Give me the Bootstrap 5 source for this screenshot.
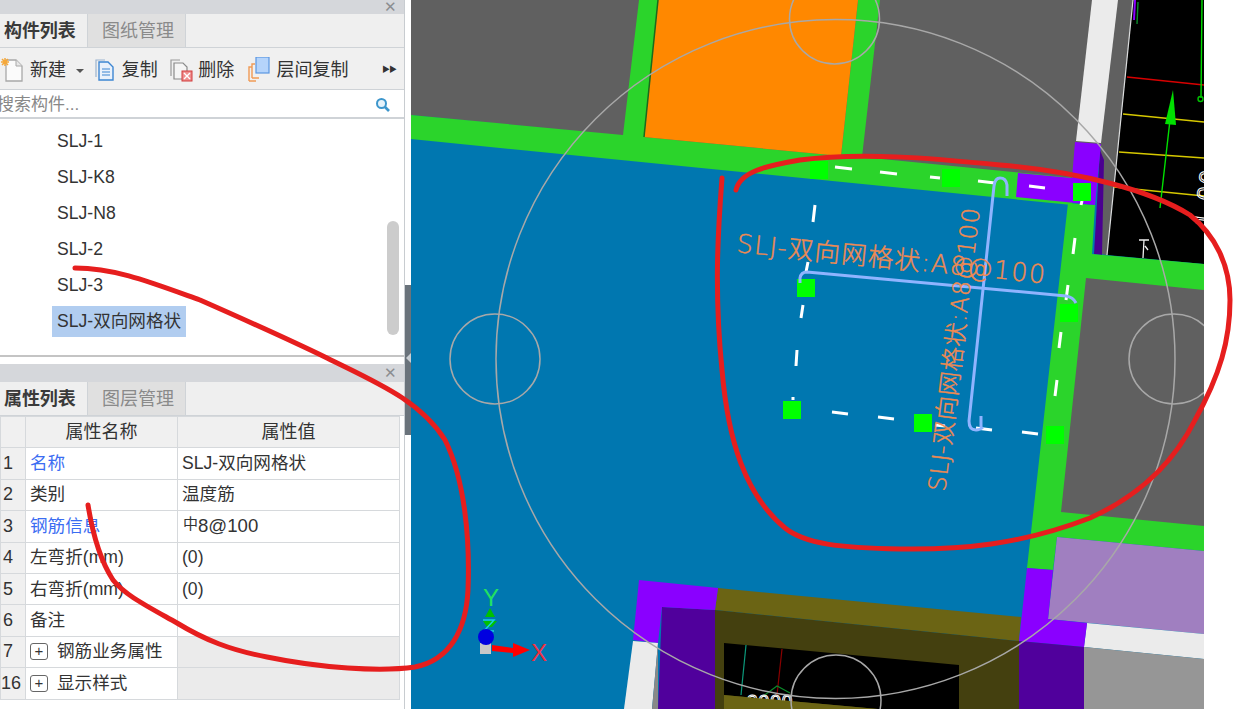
<!DOCTYPE html>
<html lang="zh-CN">

<head>
  <meta charset="UTF-8">
  <meta name="viewport" content="width=device-width, initial-scale=1.0">
  <title>构件列表</title>
  <link href="https://cdn.jsdelivr.net/npm/bootstrap@5.3.0/dist/css/bootstrap.min.css" rel="stylesheet">
  <style>
    html, body { height: 709px; overflow: hidden; }
    body {
      position: relative;
      font-family: "Liberation Sans", "Noto Sans CJK SC", sans-serif;
      font-size: 17px;
      color: #333;
      background: #fff;
    }
    .side-panel { width: 405px; height: 709px; flex: none; border-right: 1px solid #c8ccd0; }
    .side-strip { width: 6px; height: 709px; flex: none; padding-top: 285px; }
    .strip-handle { height: 150px; background: #6a737b; position: relative; }
    .strip-handle::after {
      content: "";
      position: absolute;
      top: 68px;
      left: 1px;
      border: 5px solid transparent;
      border-left: 0;
      border-right-color: #c9ced3;
    }
    .drawing { width: 793px; height: 709px; flex: none; display: block; }

    .title-bar { background: #d5d7db; color: #8b8d91; font-size: 15px; line-height: 14px; text-align: right; padding-right: 7px; }
    .title-top { height: 14px; }
    .title-low { height: 18px; line-height: 18px; }
    .tab-bar { height: 34px; background: #efefef; border-bottom: 1px solid #cfd3d7; }
    .tab-on, .tab-off { font-size: 18px; line-height: 35px; height: 33px; }
    .tab-on { width: 88px; font-weight: 700; padding-left: 4px; letter-spacing: -.1px; border-right: 1px solid #cfd3d7; color: #3a3a3a; }
    .tab-off { width: 98px; color: #8a8a8a; background: #e0e0e0; padding-left: 14px; border-right: 1px solid #cfd3d7; }

    .tool-bar { height: 42px; background: #f0f0f0; border-bottom: 1px solid #cfd3d7; }
    .tool-item { position: relative; height: 41px; line-height: 45px; font-size: 18px; white-space: nowrap; }
    .tool-item svg { position: absolute; top: 9px; left: 0; }
    .tool-new { width: 97px; padding-left: 30px; }
    .tool-new svg { left: 1px; }
    .tool-copy { width: 77px; padding-left: 27px; }
    .tool-del { width: 79px; padding-left: 28px; }
    .tool-layer { width: 138px; padding-left: 29px; }
    .tool-caret { display: inline-block; margin-left: 10px; border: 4px solid transparent; border-top-color: #555; border-bottom: 0; vertical-align: 3px; }
    .tool-more { font-size: 8px; letter-spacing: -1px; line-height: 43px; color: #333; }

    .search-row { height: 29px; border-bottom: 2px solid #cfd3d7; background: #fff; position: relative; }
    .search-input { height: 30px; border: 0; border-radius: 0; padding: 0; text-indent: -3px; font-size: 17px; color: #777; background: transparent; box-shadow: none; }
    .search-input::placeholder { color: #888; }
    .search-icon { position: absolute; right: 13px; top: 7px; }

    .comp-list { height: 238px; position: relative; padding-top: 5px; border-bottom: 2px solid #c4c4c4; }
    .comp-row { height: 36px; line-height: 35px; padding: 0 0 0 57px; border: 0; background: transparent; color: #333; font-size: 17.6px; }
    .comp-on { display: inline-block; height: 31px; line-height: 31px; padding: 0 5px; margin-left: -5px; background: #b1cdf0; }
    .list-thumb { position: absolute; right: 5px; top: 102px; width: 12px; height: 114px; background: #ccc; border-radius: 6px; }
    .panel-gap { height: 7px; background: #fff; }

    .prop-table { table-layout: fixed; width: 400px; margin: 0; font-size: 17.6px; border-color: #d6d9dc; }
    .prop-table th, .prop-table td { height: 31.4px; padding: 0 0 0 4px; line-height: 29px; vertical-align: middle; white-space: nowrap; border-width: 1px; border-color: #d6d9dc; color: #333; background: #fff; box-shadow: none; }
    .prop-table th { font-weight: 400; font-size: 18px; text-align: center; background: #f0f0f0; padding-left: 0; }
    .prop-table .row-num { background: #f0f0f0; font-size: 18px; padding: 0 0 0 2px; overflow: visible; }
    .prop-table .row-num-wide { padding-left: 0; }
    .prop-table .prop-link { color: #3b6df2; }
    .prop-table .prop-group { background: #ebebeb; }
    .plus-box { display: inline-block; width: 18px; height: 17px; border: 1px solid #666; border-radius: 3px; line-height: 13px; text-align: center; font-size: 15px; margin-right: 9px; vertical-align: 1px; background: #fff; }
    .phi-value { font-size: 18.6px; }
    .phi-mark { font-size: 15px; position: relative; top: -3px; margin-left: 1px; }

    .cad-label { font-family: "DejaVu Sans", "Noto Sans CJK SC", sans-serif; font-weight: 200; font-size: 25.5px; letter-spacing: 1.3px; fill: #f08a50; stroke: #f08a50; stroke-width: .4; }
    .cad-label-up { font-size: 24px; letter-spacing: .8px; }
    .cad-small { font-family: "Liberation Sans", sans-serif; fill: none; stroke: #fff; stroke-width: 1; }
    .axis-mark { font-family: "Liberation Sans", sans-serif; font-size: 24px; }
    .mark-layer { position: absolute; top: 0; left: 0; width: 1233px; height: 709px; pointer-events: none; }
  </style>
</head>

<body>
  <div class="d-flex">
    <div class="side-panel">
      <div class="title-bar title-top">✕</div>
      <div class="tab-bar d-flex">
        <div class="tab-on">构件列表</div>
        <div class="tab-off">图纸管理</div>
      </div>
      <div class="tool-bar d-flex">
        <div class="tool-item tool-new">
          <svg width="24" height="26" viewBox="0 0 24 26">
            <path d="M5 3H15L21 9V24H5Z" fill="#fbfbfb" stroke="#a8a8a8" stroke-width="1.3"/>
            <path d="M15 3V9H21" fill="#e8e8e8" stroke="#a8a8a8"/>
            <path d="M4 1V9M0 5H8M1 2L7 8M7 2L1 8" stroke="#f5a83a" stroke-width="1.5"/>
          </svg>新建<span class="tool-caret"></span>
        </div>
        <div class="tool-item tool-copy">
          <svg width="20" height="26" viewBox="0 0 20 26">
            <path d="M1 20V3H10" fill="none" stroke="#9bb4cf" stroke-width="1.2"/>
            <path d="M4 5H13L18 10V23H4Z" fill="#e9f1fb" stroke="#3d86d2" stroke-width="1.4"/>
            <path d="M7 12H15M7 15H15M7 18H15" stroke="#3d86d2" stroke-width="1.2"/>
          </svg>复制
        </div>
        <div class="tool-item tool-del">
          <svg width="24" height="26" viewBox="0 0 24 26">
            <path d="M1 19V3H10" fill="none" stroke="#9a9a9a" stroke-width="1.2"/>
            <path d="M4 6H13L17 10V22H4Z" fill="#f5f5f5" stroke="#8a8a8a" stroke-width="1.2"/>
            <rect x="12" y="14" width="10" height="10" fill="#ee8d8d" stroke="#d23d3d"/>
            <path d="M14 16L20 22M20 16L14 22" stroke="#fff" stroke-width="1.4"/>
          </svg>删除
        </div>
        <div class="tool-item tool-layer">
          <svg width="24" height="26" viewBox="0 0 24 26">
            <path d="M1 24V10H4M1 24H8" fill="none" stroke="#f09a55" stroke-width="1.4"/>
            <path d="M4 21V7H7M4 21H11" fill="none" stroke="#f09a55" stroke-width="1.4"/>
            <rect x="8" y="0" width="13" height="16" fill="#b5d4fb" stroke="#5b96e2" stroke-width="1.2"/>
          </svg>层间复制
        </div>
        <div class="tool-more ms-auto pe-2">▶▶</div>
      </div>
      <div class="search-row">
        <input type="text" class="form-control search-input" placeholder="搜索构件...">
        <svg class="search-icon" width="16" height="16" viewBox="0 0 16 16">
          <circle cx="6.5" cy="6.5" r="4.5" fill="#e6f3fb" stroke="#3d96cc" stroke-width="2"/>
          <path d="M10 10L14 14" stroke="#3d96cc" stroke-width="2.6"/>
        </svg>
      </div>
      <div class="comp-list">
        <div class="list-group list-group-flush">
          <div class="list-group-item comp-row">SLJ-1</div>
          <div class="list-group-item comp-row">SLJ-K8</div>
          <div class="list-group-item comp-row">SLJ-N8</div>
          <div class="list-group-item comp-row">SLJ-2</div>
          <div class="list-group-item comp-row">SLJ-3</div>
          <div class="list-group-item comp-row"><span class="comp-on">SLJ-双向网格状</span></div>
        </div>
        <div class="list-thumb"></div>
      </div>
      <div class="panel-gap"></div>
      <div class="title-bar title-low">✕</div>
      <div class="tab-bar d-flex">
        <div class="tab-on">属性列表</div>
        <div class="tab-off">图层管理</div>
      </div>
      <table class="table table-bordered prop-table">
        <colgroup>
          <col style="width: 25px">
          <col style="width: 152px">
          <col>
        </colgroup>
        <thead>
          <tr><th class="row-num"></th><th>属性名称</th><th>属性值</th></tr>
        </thead>
        <tbody>
          <tr><td class="row-num">1</td><td class="prop-link">名称</td><td>SLJ-双向网格状</td></tr>
          <tr><td class="row-num">2</td><td>类别</td><td>温度筋</td></tr>
          <tr><td class="row-num">3</td><td class="prop-link">钢筋信息</td><td class="phi-value"><span class="phi-mark">中</span>8@100</td></tr>
          <tr><td class="row-num">4</td><td>左弯折(mm)</td><td>(0)</td></tr>
          <tr><td class="row-num">5</td><td>右弯折(mm)</td><td>(0)</td></tr>
          <tr><td class="row-num">6</td><td>备注</td><td></td></tr>
          <tr><td class="row-num">7</td><td><span class="plus-box">+</span>钢筋业务属性</td><td class="prop-group"></td></tr>
          <tr><td class="row-num row-num-wide">16</td><td><span class="plus-box">+</span>显示样式</td><td class="prop-group"></td></tr>
        </tbody>
      </table>
    </div>

    <div class="side-strip">
      <div class="strip-handle"></div>
    </div>

    <svg class="drawing" viewBox="411 0 793 709">
      <rect x="411" y="0" width="793" height="709" fill="#0077b0"/>
      <!-- top rooms -->
      <polygon points="411,0 1133,0 1107,255 1095,253 1101,144 1075,180 411,115" fill="#606060"/>
      <polygon points="411,115 623,135 639,0 660,0 644,137 841,156 858,0 880,0 862,157 1075,178 1072,205 411,139" fill="#2bd42b"/>
      <polygon points="658,0 858,0 841,156 644,137" fill="#ff8800"/>
      <path d="M658,0L644,137" stroke="#1c6a1c" stroke-width="1.5"/>
      <polygon points="1092,0 1118,0 1101,143 1076,141" fill="#ebebeb"/>
      <polygon points="1133,0 1204,0 1204,264 1107,255" fill="#000"/>
      <path d="M1133,0L1107,255" stroke="#ddd" stroke-width="1.2"/>
      <polygon points="1100,150 1104,160 1102,255 1094,254" fill="#4a0090"/>

      <!-- black area lines -->
      <g fill="none" stroke-width="1.4">
        <path d="M1127,77L1204,85" stroke="#d80000"/>
        <path d="M1123,114L1204,122M1119,152L1204,158M1114,187L1204,196" stroke="#d6c800"/>
        <path d="M1160,208L1170,120M1202,0L1201,98" stroke="#00e000"/>
        <circle cx="1200.500" cy="99" r="2.500" stroke="#00c000"/>
        <path d="M1135,0L1134,20" stroke="#8a00ff" stroke-width="2"/>
        <path d="M1138,2L1137,24" stroke="#0a8a2a"/>
      </g>
      <polygon points="1173,90 1176,125 1165,124" fill="#00e000"/>
      <text class="cad-small" transform="translate(1210,227) rotate(-83)" font-size="24" letter-spacing="3">1 00</text>
      <path d="M1139,240H1149M1144,240L1143,258M1145,246L1148,250" fill="none" stroke="#eee" stroke-width="1.3"/>

      <!-- right side -->
      <polygon points="1092,254 1204,264 1204,551 1057,537 1053,570 1027,568 1068,203 1095,205" fill="#2bd42b"/>
      <polygon points="1086,278 1204,290 1204,526 1061,512" fill="#606060"/>
      <polygon points="1057,537 1204,551 1204,634 1048,619" fill="#a07fc0"/>
      <polygon points="1204,634 1087,623 1084,647 1204,659" fill="#ebebeb"/>
      <polygon points="1084,647 1204,659 1204,709 1084,709" fill="#969696"/>

      <!-- bottom block -->
      <polygon points="718,588 1021,617 1019,641 715,610" fill="#6b6414"/>
      <polygon points="715,610 1019,641 1019,709 715,709" fill="#44400f"/>
      <polygon points="724,643 959,665 959,709 878,709 724,695" fill="#000"/>
      <path d="M746,645L741,695" stroke="#0c9a7c" stroke-width="1.2"/>
      <path d="M782,649L777,695" stroke="#8a0000" stroke-width="1.2"/>
      <path d="M762,697L777,686L790,693" fill="none" stroke="#0a8a2a" stroke-width="1.2"/>
      <text class="cad-small" x="747" y="708" font-size="19" letter-spacing="1">3000</text>
      <polygon points="724,695 878,709 724,709" fill="#6b6414"/>
      <polygon points="662,607 715,610 715,709 658,709" fill="#50009c"/>
      <polygon points="639,580 718,588 715,610 662,607 658,643 633,640" fill="#8a00ff"/>
      <polygon points="633,641 658,643 652,709 624,709" fill="#ebebeb"/>
      <polygon points="658,643 652,709 658,709" fill="#888"/>
      <polygon points="1027,568 1053,570 1048,619 1087,623 1084,647 1019,641" fill="#8a00ff"/>
      <polygon points="1019,641 1084,647 1084,709 1019,709" fill="#50009c"/>
      <polygon points="1018,173 1072,178 1075,142 1101,144 1095,205 1016,197" fill="#8a00ff"/>

      <!-- guide circles -->
      <g fill="none" stroke="#a8a8a8" stroke-width="1.500">
        <circle cx="835.500" cy="359" r="339.500"/>
        <circle cx="834.500" cy="19" r="45"/>
        <circle cx="495" cy="359" r="45"/>
        <circle cx="1174" cy="359" r="45"/>
        <circle cx="836" cy="700" r="45"/>
      </g>

      <!-- dashed rebar outline -->
      <path fill="none" stroke="#fff" stroke-width="3" d="M835,167L852,169M880,172L897,174M930,177L940,178M978,181L995,183M1029,186L1045,188M815,205L813,222M808,262L806,272M803,305L801,318M797,350L796,366M793,397L793,400M1082,201L1081,205M1075,238L1073,254M1068,285L1066,300M1061,332L1059,348M1057,380L1055,396M832,412L848,414M878,417L894,419M935,425L945,426M976,428L992,430M1022,432L1038,434"/>
      <g fill="#00ff00">
        <rect x="810" y="161" width="18" height="18"/>
        <rect x="942" y="169" width="18" height="18"/>
        <rect x="1073" y="183" width="18" height="18"/>
        <rect x="1060" y="304" width="18" height="18"/>
        <rect x="1046" y="426" width="18" height="18"/>
        <rect x="914" y="414" width="18" height="18"/>
        <rect x="783" y="401" width="18" height="18"/>
        <rect x="797" y="279" width="18" height="18"/>
      </g>

      <!-- rebar lines -->
      <g fill="none" stroke="#8fb4ff" stroke-width="3">
        <path d="M1007,196L1007,185Q1006,178 1000,178Q995,178 994,186L969,421Q969,430 976,430Q980,430 983,427M981,416L981,427"/>
        <path d="M800,283L800,278Q801,272 807,272L1066,296Q1073,297 1076,303"/>
      </g>

      <!-- labels -->
      <text class="cad-label" transform="translate(736,252) rotate(5.800)">SLJ-双向网格状:A8@100</text>
      <text class="cad-label cad-label-up" transform="translate(945,492) rotate(-83)">SLJ-双向网格状:A8@100</text>

      <!-- axis -->
      <g>
        <rect x="480" y="643" width="11" height="11" fill="#c8c8c8"/>
        <polygon points="490,608 495,617 485,617" fill="#00c000"/>
        <polygon points="483,621 497,621 492,627 487,627" fill="#00c000"/>
        <path d="M483,620H494L484,631H494" fill="none" stroke="#18d0e0" stroke-width="1.500"/>
        <circle cx="486" cy="637" r="8" fill="#0000e0"/>
        <polygon points="492,645 513,648 513,643 530,650 513,657 513,653 492,651" fill="#ff0000"/>
        <text class="axis-mark" x="483" y="606" fill="#22e060">Y</text>
        <text class="axis-mark" x="531" y="661" fill="#f03040">X</text>
      </g>
    </svg>
  </div>

  <svg class="mark-layer" viewBox="0 0 1233 709">
    <g fill="none" stroke="#e61e1e" stroke-width="5" stroke-linecap="round">
      <path d="M75,268C115,268 150,282 200,300C250,322 290,340 327,358C375,382 420,400 445,440C465,480 470,540 468,590C466,630 450,660 415,667C380,672 320,668 267,657C230,650 205,640 177,623C145,605 125,595 113,580C100,560 92,530 88,505"/>
      <path d="M722,178C718,230 714,290 722,370C728,440 745,495 785,528C805,544 840,548 900,549C960,550 1020,545 1090,518C1130,500 1170,470 1195,420C1220,375 1230,340 1230,300C1230,265 1215,235 1190,215C1150,190 1080,172 1000,165C930,158 860,152 800,160C765,166 740,172 736,190"/>
    </g>
  </svg>

  <script src="https://cdn.jsdelivr.net/npm/bootstrap@5.3.0/dist/js/bootstrap.bundle.min.js"></script>
</body>

</html>
